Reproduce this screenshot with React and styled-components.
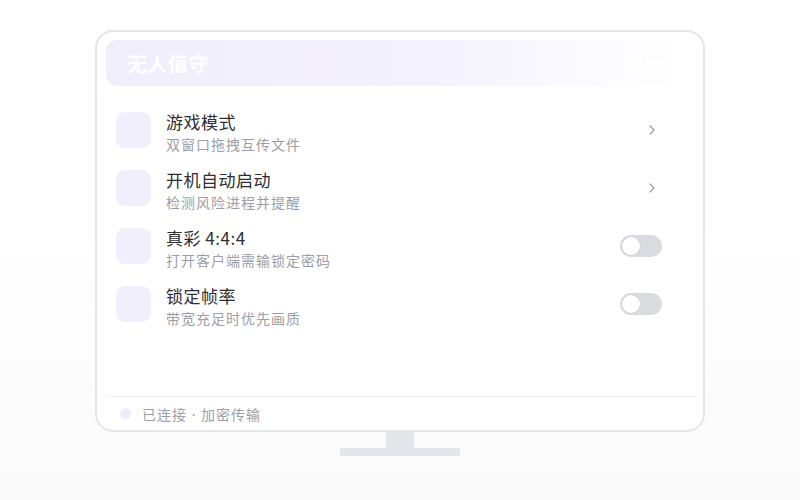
import React from 'react';
import styled, { createGlobalStyle } from 'styled-components';

const GlobalStyle = createGlobalStyle`
  html, body {
    margin: 0;
    padding: 0;
  }
  body {
    font-family: 'Noto Sans CJK SC', 'Noto Sans', sans-serif;
    background: linear-gradient(180deg, #ffffff 0%, #ffffff 45%, #fafafb 100%);
    min-height: 100vh;
  }
`;

const Page = styled.div`
  display: flex;
  flex-direction: column;
  align-items: center;
  padding-top: 30px;
  height: 500px;
  box-sizing: border-box;
`;

const Monitor = styled.div`
  width: 610px;
  height: 402px;
  box-sizing: border-box;
  border: 2px solid #e3e6eb;
  border-radius: 18px;
  background: #fff;
  padding: 8px 8px 0 9px;
  display: flex;
  flex-direction: column;
`;

const Header = styled.div`
  height: 46px;
  border-radius: 11px;
  background: linear-gradient(90deg, #f1eefc 0%, #f4f2fd 55%, #ffffff 98%);
  display: flex;
  align-items: center;
  justify-content: space-between;
  padding: 0 30px 0 21px;
`;

const HeaderTitle = styled.div`
  color: #fff;
  font-size: 20px;
  font-weight: 700;
  letter-spacing: 0.5px;
`;

const List = styled.div`
  margin-top: 26px;
  padding: 0 33px 0 10px;
  display: flex;
  flex-direction: column;
  gap: 17px;
`;

const Row = styled.div`
  display: flex;
  align-items: flex-start;
  gap: 15px;
`;

const IconBox = styled.div`
  width: 35px;
  height: 36px;
  border-radius: 9px;
  background: #f2effc;
  flex-shrink: 0;
`;

const Texts = styled.div`
  flex: 1;
  display: flex;
  flex-direction: column;
`;

const Title = styled.div`
  font-size: 17px;
  line-height: 20px;
  color: #2e2e33;
  letter-spacing: 0.5px;
`;

const Sub = styled.div`
  margin-top: 3px;
  font-size: 14px;
  line-height: 18px;
  color: #9c9ea5;
  letter-spacing: 1px;
`;

const Trailing = styled.div`
  height: 36px;
  display: flex;
  align-items: center;
`;

const Toggle = styled.div`
  width: 42px;
  height: 22px;
  border-radius: 11px;
  background: #d9dbe1;
  position: relative;
`;

const Knob = styled.div`
  position: absolute;
  top: 2px;
  left: 2px;
  width: 18px;
  height: 18px;
  border-radius: 50%;
  background: #fff;
  box-shadow: 0 0 0 0.5px #c9ccd3;
`;

const Footer = styled.div`
  margin-top: auto;
  height: 33px;
  border-top: 1px solid #eceef2;
  display: flex;
  align-items: center;
  padding-left: 14px;
  gap: 11px;
`;

const Dot = styled.div`
  width: 11px;
  height: 11px;
  border-radius: 50%;
  background: #efebfc;
`;

const FooterText = styled.div`
  font-family: 'Noto Sans', 'Noto Sans CJK SC', sans-serif;
  font-size: 14px;
  color: #9c9ea5;
  letter-spacing: 1px;
`;

const Neck = styled.div`
  width: 28px;
  height: 16px;
  background: #e3e6ea;
`;

const Base = styled.div`
  width: 120px;
  height: 8px;
  background: #e3e6ea;
`;

const Chevron = () => (
  <svg width="10" height="12" viewBox="0 0 10 12" style={{ marginRight: 6 }}>
    <path d="M4 2 L8 6 L4 10" fill="none" stroke="#979ba4" strokeWidth="1.2" strokeLinecap="round" strokeLinejoin="round" />
  </svg>
);

const MoreDots = () => (
  <svg width="30" height="10" viewBox="0 0 30 10">
    <circle cx="4" cy="5" r="3.5" fill="#fff" />
    <circle cx="15" cy="5" r="3.5" fill="#fff" />
    <circle cx="26" cy="5" r="3.5" fill="#fff" />
  </svg>
);

const items = [
  { title: '游戏模式', sub: '双窗口拖拽互传文件', kind: 'link' },
  { title: '开机自动启动', sub: '检测风险进程并提醒', kind: 'link' },
  { title: '真彩 4:4:4', sub: '打开客户端需输锁定密码', kind: 'toggle' },
  { title: '锁定帧率', sub: '带宽充足时优先画质', kind: 'toggle' },
];

const App = () => {
  return (
    <>
      <GlobalStyle />
      <Page>
        <Monitor>
          <Header>
            <HeaderTitle>无人值守</HeaderTitle>
            <MoreDots />
          </Header>
          <List>
            {items.map((item) => (
              <Row key={item.title}>
                <IconBox />
                <Texts>
                  <Title>{item.title}</Title>
                  <Sub>{item.sub}</Sub>
                </Texts>
                <Trailing>
                  {item.kind === 'link' ? (
                    <Chevron />
                  ) : (
                    <Toggle>
                      <Knob />
                    </Toggle>
                  )}
                </Trailing>
              </Row>
            ))}
          </List>
          <Footer>
            <Dot />
            <FooterText>已连接 · 加密传输</FooterText>
          </Footer>
        </Monitor>
        <Neck />
        <Base />
      </Page>
    </>
  );
};

export default App;
